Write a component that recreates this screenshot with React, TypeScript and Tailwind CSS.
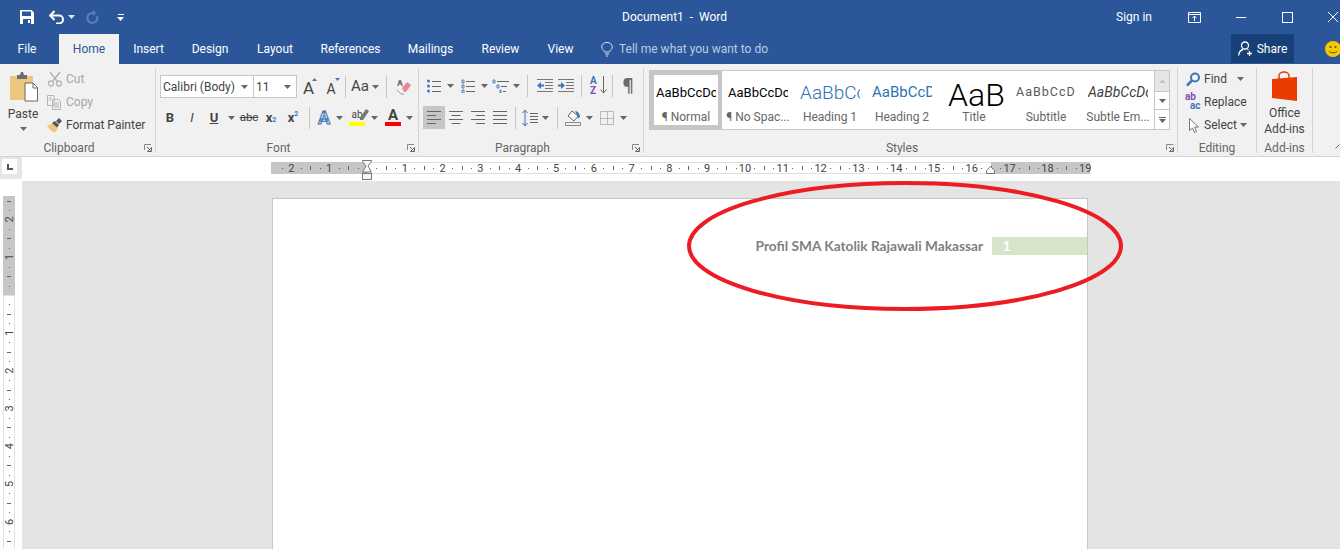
import type { ReactNode } from 'react'

const cell = 'flex items-center justify-center h-full shrink-0'

function Caret({ color = '#666' }: { color?: string }) {
  return (
    <svg width="7" height="4" viewBox="0 0 7 4">
      <path d="M0 0h7L3.5 4z" fill={color} />
    </svg>
  )
}

function Sep({ h = 'h-[22px]' }: { h?: string }) {
  return <div className={`w-px bg-[#c6c6c6] ${h}`} />
}

function Launcher() {
  return (
    <svg width="8" height="8" viewBox="0 0 8 8" fill="none">
      <path d="M.5 6V.5H7" stroke="#888" />
      <path d="M3 3l3.5 3.5M7.5 3.5v4h-4z" stroke="#666" />
    </svg>
  )
}

function Group({ label, width, launcher = false, last = false, children }: { label: string; width: string; launcher?: boolean; last?: boolean; children: ReactNode }) {
  return (
    <div className={`relative flex flex-col shrink-0 mt-[4px] h-[85px] ${width} ${last ? '' : 'border-r border-[#d4d4d4]'}`}>
      <div className="h-[74px] shrink-0">{children}</div>
      <div className={`h-[13px] flex items-center justify-center text-[12px] leading-none text-[#666] ${launcher ? 'pr-[17px]' : ''}`}>{label}</div>
      {launcher && (
        <div className="absolute right-[3px] bottom-[1px]">
          <Launcher />
        </div>
      )}
    </div>
  )
}

function TitleBar() {
  return (
    <div className="h-[34px] flex items-center bg-[#2b579a] text-white text-[12px]">
      <div className="w-[622px] shrink-0 flex items-center h-full">
        <svg className="ml-[20px]" width="14" height="14" viewBox="0 0 14 14">
          <path d="M0 0h11.5L14 2.5V14H0z" fill="#fff" />
          <path d="M2 1.5h9v4.5H2zM3 9h8v5H3z" fill="#2b579a" />
          <path d="M8 10h2v3H8z" fill="#fff" />
        </svg>
        <svg className="ml-[15px]" width="16" height="14" viewBox="0 0 16 14" fill="none">
          <path d="M1.500 5.500h8.500a4 4 0 0 1 0 8H7" stroke="#fff" strokeWidth="2" />
          <path d="M5.500 1L1.200 5.500 5.500 10" stroke="#fff" strokeWidth="2" />
        </svg>
        <div className="ml-[3px]">
          <Caret color="#dfe6f1" />
        </div>
        <svg className="ml-[10px]" width="14" height="14" viewBox="0 0 14 14" fill="none">
          <path d="M9 3H6.500a5 5 0 1 0 5.500 3" stroke="#5f80b3" strokeWidth="2" />
          <path d="M8 0v6l3-3z" fill="#5f80b3" />
        </svg>
        <div className="ml-[18px] flex flex-col items-center gap-[2px]">
          <div className="w-[6px] h-px bg-white" />
          <Caret color="#fff" />
        </div>
      </div>
      <div className="w-[494px] shrink-0 whitespace-pre">Document1  -  Word</div>
      <div className="w-[36px] shrink-0 whitespace-nowrap">Sign in</div>
      <svg className="ml-[36px]" width="13" height="11" viewBox="0 0 13 11" fill="none">
        <path d="M.5.5h12v10H.5zM.5 2.500h12" stroke="#fff" />
        <path d="M6.500 9V4M4.500 6l2-2 2 2" stroke="#fff" />
      </svg>
      <div className="ml-[35px] w-[10px] h-px bg-white" />
      <div className="ml-[36px] w-[11px] h-[11px] border border-white" />
      <svg className="ml-[35px]" width="10" height="10" viewBox="0 0 10 10">
        <path d="M0 0l10 10M10 0L0 10" stroke="#fff" />
      </svg>
    </div>
  )
}

const tabs = [
  { name: 'File', width: 'w-[54px]' },
  { name: 'Home', width: 'w-[60px] ml-[5px] bg-[#f1f1f1] text-[#2b579a]' },
  { name: 'Insert', width: 'w-[59px]' },
  { name: 'Design', width: 'w-[64px]' },
  { name: 'Layout', width: 'w-[66px]' },
  { name: 'References', width: 'w-[85px]' },
  { name: 'Mailings', width: 'w-[75px]' },
  { name: 'Review', width: 'w-[65px]' },
  { name: 'View', width: 'w-[55px]' },
]

function TabRow() {
  return (
    <div className="h-[30px] flex bg-[#2b579a] text-white text-[12px] overflow-hidden">
      {tabs.map((tab) => (
        <div key={tab.name} className={`${cell} ${tab.width}`}>
          {tab.name}
        </div>
      ))}
      <div className="w-[643px] shrink-0 flex items-center">
        <svg className="ml-[13px]" width="12" height="15" viewBox="0 0 12 15" fill="none">
          <path d="M3.500 10C3 8 .7 7.500.7 4.800a5.200 4.300 0 0 1 10.600 0c0 2.700-2.300 3.200-2.800 5.200zM4 12h4M5 14h2" stroke="#d5deec" />
        </svg>
        <span className="ml-[6px] text-[#bccce3] whitespace-nowrap">Tell me what you want to do</span>
      </div>
      <div className="w-[63px] h-[29px] shrink-0 bg-[#173f78] flex items-center justify-center gap-[4px]">
        <svg width="15" height="15" viewBox="0 0 15 15" fill="none">
          <circle cx="7" cy="4.500" r="3.500" stroke="#fff" strokeWidth="1.300" />
          <path d="M.7 14.500C1 11 3 9 5 8.500M9.500 8.500l1 .5M11.500 10v5M9 12.500h5" stroke="#fff" strokeWidth="1.300" />
        </svg>
        <span>Share</span>
      </div>
      <svg className="ml-[31px] mt-[7px] shrink-0" width="16" height="16" viewBox="0 0 16 16">
        <circle cx="8" cy="8" r="8" fill="#f6c800" />
        <circle cx="5.500" cy="6" r="1" fill="#5a4a10" />
        <circle cx="10.500" cy="6" r="1" fill="#5a4a10" />
        <path d="M4 10c1.500 2.500 6.500 2.500 8 0" stroke="#5a4a10" fill="none" />
      </svg>
    </div>
  )
}

function ClipboardGroup() {
  return (
    <Group label="Clipboard" width="w-[156px]" launcher>
      <div className="flex h-full">
        <div className="w-[46px] shrink-0 flex flex-col items-center">
          <svg className="mt-[4px]" width="29" height="31" viewBox="0 0 29 31">
            <path d="M1 4h23v24H1z" fill="#eec77f" />
            <path d="M8 3h3l1-3h2l1 3h3v4H8z" fill="#6e6e6e" />
            <path d="M16 11h8l4.500 4.500V29H16z" fill="#fff" stroke="#666" />
            <path d="M24 11v5h4.500" fill="none" stroke="#666" />
          </svg>
          <div className="mt-[3px] text-[12px] leading-[16px] text-[#444]">Paste</div>
          <div className="mt-[5px]">
            <Caret />
          </div>
        </div>
        <div className="flex flex-col gap-[3px] pt-[1px] text-[12px] leading-none">
          <div className="h-[20px] flex items-center text-[#a6a6a6]">
            <svg className="w-[20px] shrink-0" width="20" height="16" viewBox="0 0 20 16" fill="none">
              <path d="M4 1l7 9M14 1L7 10" stroke="#b5b5b5" strokeWidth="1.500" />
              <circle cx="5" cy="12.500" r="2.500" stroke="#b5b5b5" strokeWidth="1.300" />
              <circle cx="13" cy="12.500" r="2.500" stroke="#b5b5b5" strokeWidth="1.300" />
            </svg>
            Cut
          </div>
          <div className="h-[20px] flex items-center text-[#a6a6a6]">
            <svg className="w-[20px] shrink-0" width="20" height="15" viewBox="0 0 20 15" fill="none">
              <path d="M1.500.5H8v10H1.500zM6.500 4.500h6l2 2v8h-8z" fill="#f1f1f1" stroke="#b5b5b5" />
              <path d="M3 3h3M3 5h2M8 8h5M8 10h5M8 12h5" stroke="#b5b5b5" />
            </svg>
            Copy
          </div>
          <div className="h-[20px] flex items-center text-[#444] whitespace-nowrap">
            <svg className="w-[20px] shrink-0" width="20" height="15" viewBox="0 0 20 15">
              <path d="M1 8l6-3 5 5-3 4.500C6 14 3 11 1 8z" fill="#eec77f" />
              <path d="M6 5l3-2 4 4-2 2.500zM10 3l3-3 3 3-3 3z" fill="#555" />
            </svg>
            Format Painter
          </div>
        </div>
      </div>
    </Group>
  )
}

function FontGroup() {
  return (
    <Group label="Font" width="w-[263px]" launcher>
      <div className="ml-[4px] mt-[7px] h-[23px] flex text-[#444]">
        <div className="w-[94px] shrink-0 h-full flex items-center justify-between bg-white border border-[#c6c6c6] pl-[2px] pr-[5px] pt-[1px] text-[12px] whitespace-nowrap">
          Calibri (Body)
          <Caret />
        </div>
        <div className="w-[43px] shrink-0 h-full flex items-center justify-between bg-white border border-l-0 border-[#c6c6c6] pl-[2px] pr-[5px] pt-[1px] text-[12px]">
          11
          <Caret />
        </div>
        <div className={`${cell} w-[25px] relative`}>
          <span className="text-[17px] leading-none mt-[3px] mr-[2px]">A</span>
          <svg className="absolute right-[5px] top-[3px]" width="5" height="3" viewBox="0 0 5 3">
            <path d="M2.500 0L5 3H0z" fill="#3f77b7" />
          </svg>
        </div>
        <div className={`${cell} w-[20px] relative`}>
          <span className="text-[14px] leading-none mt-[4px] mr-[2px]">A</span>
          <svg className="absolute right-[2px] top-[3px]" width="5" height="3" viewBox="0 0 5 3">
            <path d="M0 0h5L2.500 3z" fill="#3f77b7" />
          </svg>
        </div>
        <div className={`${cell} w-[7px]`}>
          <Sep />
        </div>
        <div className={`${cell} w-[22px] text-[15px]`}>Aa</div>
        <div className={`${cell} w-[9px]`}>
          <Caret />
        </div>
        <div className={`${cell} w-[13px]`}>
          <Sep />
        </div>
        <div className={`${cell} w-[21px]`}>
          <svg width="15" height="16" viewBox="0 0 15 16">
            <path d="M6 9l5-6 4 3-5 7H8z" fill="#e98795" />
            <path d="M3 1h2l2 6H5.500L5 5.500H3L2.500 7H1z" fill="#777" />
            <path d="M1 11l4 4h3" stroke="#999" fill="none" />
          </svg>
        </div>
      </div>
      <div className="ml-[3px] mt-[8px] h-[23px] flex text-[#444]">
        <div className={`${cell} w-[22px] text-[13px] font-bold`}>B</div>
        <div className={`${cell} w-[22px] text-[13px] italic`}>I</div>
        <div className={`${cell} w-[22px] text-[13px] font-bold underline`}>U</div>
        <div className={`${cell} w-[12px]`}>
          <Caret />
        </div>
        <div className={`${cell} w-[24px] text-[11.500px] line-through`}>abc</div>
        <div className={`${cell} w-[20px] text-[13px] font-bold`}>
          x<span className="text-[7px] mt-[6px] text-[#3f77b7]">2</span>
        </div>
        <div className={`${cell} w-[24px] text-[13px] font-bold`}>
          x<span className="text-[7px] mb-[6px] text-[#3f77b7]">2</span>
        </div>
        <div className={`${cell} w-[9px]`}>
          <Sep />
        </div>
        <div className={`${cell} w-[20px] text-[18px] font-bold text-[#dbe6f3] [-webkit-text-stroke:1px_#3f77b7]`}>A</div>
        <div className={`${cell} w-[11px]`}>
          <Caret />
        </div>
        <div className={`${cell} w-[24px] flex-col`}>
          <div className="text-[10px] leading-[12px] relative">
            ab
            <svg className="absolute left-[8px] top-0" width="10" height="12" viewBox="0 0 10 12">
              <path d="M1 9l6-9 3 2-6 9H1z" fill="#777" />
            </svg>
          </div>
          <div className="w-[16px] h-[4px] mt-[1px] bg-[#ffff00]" />
        </div>
        <div className={`${cell} w-[10px]`}>
          <Caret />
        </div>
        <div className={`${cell} w-[24px] ml-[2px] flex-col`}>
          <div className="text-[15px] leading-[13px] font-bold">A</div>
          <div className="w-[16px] h-[4px] bg-[#ff0000]" />
        </div>
        <div className={`${cell} w-[8px]`}>
          <Caret />
        </div>
      </div>
    </Group>
  )
}

function Lines({ rows }: { rows: string }) {
  return (
    <svg width="14" height="13" viewBox="0 0 14 13" fill="none">
      <path d={rows} stroke="#666" />
    </svg>
  )
}

function ListIcon({ marks }: { marks: 'dots' | 'nums' }) {
  return (
    <svg width="14" height="14" viewBox="0 0 14 14" fill="none">
      <path d="M5 2.500h9M5 7.500h9M5 12.500h9" stroke="#666" />
      {marks === 'dots' ? (
        <>
          <circle cx="1.500" cy="2" r="1.500" fill="#3f77b7" />
          <circle cx="1.500" cy="7" r="1.500" fill="#3f77b7" />
          <circle cx="1.500" cy="12" r="1.500" fill="#3f77b7" />
        </>
      ) : (
        <path d="M1 1h2v3H1zM1 6h2v3H1zM1 11h2v3H1z" stroke="#3f77b7" strokeWidth=".9" />
      )}
    </svg>
  )
}

function ParagraphGroup() {
  return (
    <Group label="Paragraph" width="w-[225px]" launcher>
      <div className="ml-[4px] mt-[6px] h-[23px] flex text-[#444]">
        <div className={`${cell} w-[21px]`}>
          <ListIcon marks="dots" />
        </div>
        <div className={`${cell} w-[12px]`}>
          <Caret />
        </div>
        <div className={`${cell} w-[24px]`}>
          <ListIcon marks="nums" />
        </div>
        <div className={`${cell} w-[9px]`}>
          <Caret />
        </div>
        <div className={`${cell} w-[23px]`}>
          <svg width="18" height="14" viewBox="0 0 18 14" fill="none">
            <path d="M5 2.500h12M9 7.500h6M11 12.500h3" stroke="#666" />
            <path d="M1 1h2v3H1zM5 6h2v3H5zM8 11h1v3H8z" stroke="#3f77b7" strokeWidth=".9" />
          </svg>
        </div>
        <div className={`${cell} w-[9px]`}>
          <Caret />
        </div>
        <div className={`${cell} w-[13px]`}>
          <Sep />
        </div>
        <div className={`${cell} w-[21px]`}>
          <svg width="16" height="13" viewBox="0 0 16 13" fill="none">
            <path d="M0 .5h16M8 3.500h8M8 6.500h8M8 9.500h8M0 12.500h16" stroke="#777" />
            <path d="M0 6.500l4-3.500v2.500h3v2H4V10z" fill="#3f77b7" />
          </svg>
        </div>
        <div className={`${cell} w-[22px]`}>
          <svg width="16" height="13" viewBox="0 0 16 13" fill="none">
            <path d="M0 .5h16M8 3.500h8M8 6.500h8M8 9.500h8M0 12.500h16" stroke="#777" />
            <path d="M7 6.500L3 3v2.500H0v2h3V10z" fill="#3f77b7" />
          </svg>
        </div>
        <div className={`${cell} w-[8px]`}>
          <Sep />
        </div>
        <div className={`${cell} w-[26px] relative`}>
          <span className="absolute left-[5px] top-[2px] text-[10px] leading-[9px] font-bold text-[#3f77b7]">A</span>
          <span className="absolute left-[5px] top-[12px] text-[10px] leading-[9px] font-bold text-[#7f4fb5]">Z</span>
          <svg className="absolute left-[15px] top-[2px]" width="7" height="18" viewBox="0 0 7 18" fill="none">
            <path d="M3.500 0v17M.5 13.500l3 3.500 3-3.500" stroke="#666" />
          </svg>
        </div>
        <div className={`${cell} w-[2px]`}>
          <Sep />
        </div>
        <div className={`${cell} w-[30px] text-[17px] font-bold text-[#6a6a6a] font-['Open_Sans',sans-serif]`}>¶</div>
      </div>
      <div className="ml-[4px] mt-[9px] h-[23px] flex text-[#444]">
        <div className={`${cell} w-[22px] bg-[#c6c6c6]`}>
          <Lines rows="M0 .5h14M0 4.500h9M0 8.500h14M0 12.500h9" />
        </div>
        <div className={`${cell} w-[22px]`}>
          <Lines rows="M0 .5h14M2.500 4.500h9M0 8.500h14M2.500 12.500h9" />
        </div>
        <div className={`${cell} w-[22px]`}>
          <Lines rows="M0 .5h14M5 4.500h9M0 8.500h14M5 12.500h9" />
        </div>
        <div className={`${cell} w-[22px]`}>
          <Lines rows="M0 .5h14M0 4.500h14M0 8.500h14M0 12.500h14" />
        </div>
        <div className={`${cell} w-[8px]`}>
          <Sep />
        </div>
        <div className={`${cell} w-[22px]`}>
          <svg width="16" height="16" viewBox="0 0 16 16" fill="none">
            <path d="M3 0v16M.5 3L3 0l2.500 3M.5 13L3 16l2.500-3" stroke="#3f77b7" />
            <path d="M8 3.500h8M8 6.500h8M8 9.500h8M8 12.500h8" stroke="#666" />
          </svg>
        </div>
        <div className={`${cell} w-[8px]`}>
          <Caret />
        </div>
        <div className={`${cell} w-[16px]`}>
          <Sep />
        </div>
        <div className={`${cell} w-[16px]`}>
          <svg width="16" height="16" viewBox="0 0 16 16" fill="none">
            <path d="M3 6l4-5 6 5-4 5z" fill="#fff" stroke="#666" />
            <path d="M10 1c3 0 5 3 5 6l-2 1.500-1-3.500z" fill="#3f77b7" />
            <path d="M.5 12.500h15v3H.5z" fill="#f1f1f1" stroke="#888" />
          </svg>
        </div>
        <div className={`${cell} w-[16px]`}>
          <Caret />
        </div>
        <div className={`${cell} w-[19px]`}>
          <svg width="14" height="14" viewBox="0 0 14 14" fill="none">
            <path d="M.5.5h13v13H.5zM7.500 .5v13M.5 7.500h13" stroke="#888" strokeDasharray="1 1" />
          </svg>
        </div>
        <div className={`${cell} w-[14px]`}>
          <Caret />
        </div>
      </div>
    </Group>
  )
}

const styleItems = [
  { label: '¶ Normal', preview: 'text-[13px] text-black', selected: true },
  { label: '¶ No Spac...', preview: 'text-[13px] text-black', selected: false },
  { label: 'Heading 1', preview: 'text-[19px] font-light text-[#2e74b5]', selected: false },
  { label: 'Heading 2', preview: 'text-[15px] text-[#2e74b5]', selected: false },
  { label: 'Title', preview: 'text-[32px] font-light text-black mt-[6px] ml-[4px]', selected: false },
  { label: 'Subtitle', preview: 'text-[12.500px] tracking-[1px] text-[#5a5a5a]', selected: false },
  { label: 'Subtle Em...', preview: 'text-[14px] italic text-[#404040]', selected: false },
]

const previewText: Record<string, string> = {
  'Heading 1': 'AaBbCc',
  'Heading 2': 'AaBbCcD',
  Title: 'AaB',
  Subtitle: 'AaBbCcD',
}

function StylesGroup() {
  return (
    <Group label="Styles" width="w-[534px]" launcher>
      <div className="ml-[5px] mt-[2px] w-[521px] h-[60px] flex bg-white border border-[#c6c6c6]">
        {styleItems.map((item) => (
          <div key={item.label} className={`w-[72px] h-full shrink-0 flex flex-col items-center overflow-hidden ${item.selected ? 'border-[4px] border-[#c6c6c6]' : 'border-[4px] border-transparent'}`}>
            <div className="w-[60px] h-[34px] shrink-0 flex items-center justify-start overflow-hidden">
              <span className={`whitespace-nowrap leading-none ${item.preview}`}>{previewText[item.label] ?? 'AaBbCcDc'}</span>
            </div>
            <div className="text-[12px] leading-[16px] text-[#666] whitespace-nowrap">{item.label}</div>
          </div>
        ))}
        <div className="flex-1 flex flex-col border-l border-[#c6c6c6]">
          <div className="h-[20px] bg-[#e6e6e6] flex items-center justify-center">
            <svg width="7" height="4" viewBox="0 0 7 4">
              <path d="M3.500 0L7 4H0z" fill="#c6c6c6" />
            </svg>
          </div>
          <div className="h-[19px] border-y border-[#c6c6c6] flex items-center justify-center">
            <Caret />
          </div>
          <div className="flex-1 flex flex-col items-center justify-center gap-[1px]">
            <div className="w-[7px] h-px bg-[#666]" />
            <Caret />
          </div>
        </div>
      </div>
    </Group>
  )
}

function EditingGroup() {
  return (
    <Group label="Editing" width="w-[79px]">
      <div className="flex flex-col gap-[3px] pt-[1px] text-[12px] leading-none text-[#444] pl-[7px]">
        <div className="h-[20px] flex items-center">
          <svg className="w-[19px] shrink-0" width="19" height="15" viewBox="0 0 19 15" fill="none">
            <circle cx="10" cy="5.500" r="4" stroke="#3f77b7" strokeWidth="2" />
            <path d="M7 8.500L2 13.500" stroke="#3f77b7" strokeWidth="2.500" />
          </svg>
          Find
          <div className="ml-[10px]">
            <Caret />
          </div>
        </div>
        <div className="h-[20px] flex items-center">
          <div className="w-[19px] shrink-0 relative h-full text-[10px] leading-[8px] font-bold">
            <span className="absolute left-0 top-[1px] text-[#7f4fb5]">ab</span>
            <span className="absolute left-[5px] top-[10px] text-[#3f77b7]">ac</span>
          </div>
          Replace
        </div>
        <div className="h-[20px] flex items-center">
          <svg className="w-[19px] shrink-0" width="19" height="15" viewBox="0 0 19 15" fill="none">
            <path d="M4.500.5v12l3-2.500 2 4.500 2-1-2-4.500h4z" fill="#fff" stroke="#777" />
          </svg>
          Select
          <div className="ml-[3px]">
            <Caret />
          </div>
        </div>
      </div>
    </Group>
  )
}

function AddinsGroup() {
  return (
    <Group label="Add-ins" width="w-[56px]">
      <div className="flex flex-col items-center text-[12px] leading-[16px] text-[#444]">
        <svg className="mt-[3px]" width="25" height="30" viewBox="0 0 25 30">
          <path d="M7 8V5a5 4 0 0 1 10 0v4" stroke="#eb3c00" strokeWidth="1.500" fill="none" />
          <path d="M0 8l25-2v24L0 27z" fill="#eb3c00" />
        </svg>
        <div className="mt-[4px]">Office</div>
        <div className="whitespace-nowrap">Add-ins</div>
      </div>
    </Group>
  )
}

function Ribbon() {
  return (
    <div className="h-[93px] flex bg-[#f1f1f1] border-b border-[#d4d4d4] overflow-hidden relative">
      <ClipboardGroup />
      <FontGroup />
      <ParagraphGroup />
      <StylesGroup />
      <EditingGroup />
      <AddinsGroup />
      <svg className="absolute right-0 bottom-[7px]" width="5" height="5" viewBox="0 0 5 5" fill="none">
        <path d="M.5 4.500L4.500 .5" stroke="#666" />
      </svg>
    </div>
  )
}

const CM = 37.8
const ticks = Array.from({ length: 92 }, (_, i) => (i - 12) / 4)

function HorizontalRuler() {
  return (
    <svg className="ml-[249px] shrink-0" width="820" height="24" viewBox="0 0 820 24" fill="none">
      <rect x="96" y="5.500" width="624" height="11" fill="#fff" stroke="#e1e1e1" />
      <rect x="0" y="5" width="96" height="12" fill="#c6c6c6" />
      <rect x="720" y="5" width="99" height="12" fill="#c6c6c6" />
      {ticks.map((t) => {
        const x = 96 + t * CM
        if (x < 2 || x > 818 || t === 0) return null
        if (Number.isInteger(t)) {
          return (
            <text key={t} x={x} y="15" textAnchor="middle" fontSize="11" fill="#444" fontFamily="Roboto, sans-serif">
              {Math.abs(t)}
            </text>
          )
        }
        if (t % 1 === 0.5 || t % 1 === -0.5) return <rect key={t} x={Math.round(x)} y="9" width="1" height="4" fill="#666" />
        return <rect key={t} x={Math.round(x)} y="11" width="1" height="1" fill="#666" />
      })}
      <path d="M91.500 3.500h9v1L97 9l3.500 6H91.500l3.500-6-3.500-4.500z" fill="#f8f8f8" stroke="#777" />
      <rect x="91.500" y="16.500" width="9" height="6" fill="#f8f8f8" stroke="#777" />
      <path d="M715.500 16.500v-3l4-4 4 4v3z" fill="#f8f8f8" stroke="#777" />
    </svg>
  )
}

function VerticalRuler() {
  return (
    <svg width="22" height="353" viewBox="0 0 22 353" fill="none">
      <rect x="3.500" y="99.500" width="11" height="260" fill="#fff" stroke="#e1e1e1" />
      <rect x="3" y="0" width="12" height="99" fill="#c6c6c6" />
      {ticks.map((t) => {
        const y = 99 + t * CM
        if (y < 4 || y > 352 || t === 0) return null
        if (Number.isInteger(t)) {
          return (
            <text key={t} x="0" y="0" transform={`translate(13 ${y}) rotate(-90)`} textAnchor="middle" fontSize="11" fill="#444" fontFamily="Roboto, sans-serif">
              {Math.abs(t)}
            </text>
          )
        }
        if (t % 1 === 0.5 || t % 1 === -0.5) return <rect key={t} x="7" y={Math.round(y)} width="4" height="1" fill="#666" />
        return <rect key={t} x="9" y={Math.round(y)} width="1" height="1" fill="#666" />
      })}
    </svg>
  )
}

function RulerRow() {
  return (
    <div className="h-[24px] flex bg-white">
      <div className="w-[22px] h-[22px] shrink-0 bg-[#e6e6e6] pl-[2px] pt-[2px]">
        <div className="w-[15px] h-[15px] bg-white flex items-center justify-center">
          <div className="w-[6px] h-[6px] border-l-2 border-b-2 border-[#555]" />
        </div>
      </div>
      <HorizontalRuler />
    </div>
  )
}

function Page() {
  return (
    <div className="w-[816px] h-full bg-white border border-b-0 border-[#c6c6c6] pt-[37px]">
      <div className="flex justify-end items-center gap-[9px] font-['Lato',sans-serif]">
        <span className="text-[13.700px] font-bold text-[#7f7f7f] whitespace-nowrap">Profil SMA Katolik Rajawali Makassar</span>
        <div className="w-[95px] h-[18px] bg-[#d6e5c9] pl-[11px] flex items-center text-[13px] font-bold text-white">1</div>
      </div>
    </div>
  )
}

export default function App() {
  return (
    <div className="relative w-[1340px] h-[549px] overflow-hidden flex flex-col bg-white font-['Roboto',sans-serif]">
      <TitleBar />
      <TabRow />
      <Ribbon />
      <RulerRow />
      <div className="flex-1 flex min-h-0">
        <div className="w-[22px] shrink-0 bg-white pt-[15px]">
          <VerticalRuler />
        </div>
        <div className="flex-1 bg-[#e4e4e4] pl-[250px] pt-[17px]">
          <Page />
        </div>
      </div>
      <svg className="absolute left-[680px] top-[175px] pointer-events-none" width="450" height="142" viewBox="0 0 450 142" fill="none">
        <ellipse cx="225" cy="71" rx="216" ry="63" stroke="#ed1c24" strokeWidth="4" />
      </svg>
    </div>
  )
}
